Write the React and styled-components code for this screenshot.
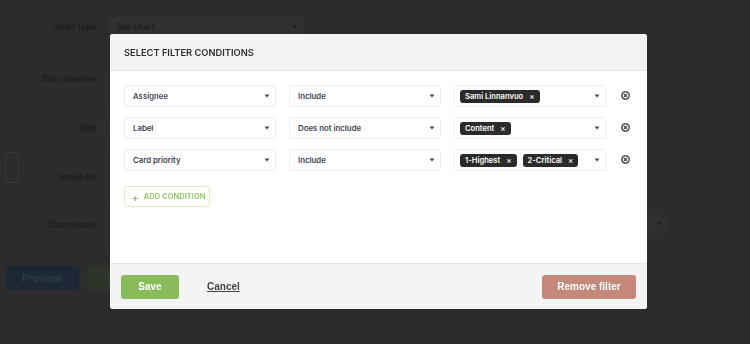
import React from "react";
import styled, { createGlobalStyle } from "styled-components";

const GlobalStyle = createGlobalStyle`
  html, body {
    margin: 0;
    padding: 0;
    background: #2c2c2c;
    overflow: hidden;
  }
  * {
    box-sizing: border-box;
  }
`;

const conditions = [
  { field: "Assignee", op: "Include", values: ["Sami Linnanvuo"] },
  { field: "Label", op: "Does not include", values: ["Content"] },
  { field: "Card priority", op: "Include", values: ["1-Highest", "2-Critical"] },
];

const formRows = [
  { label: "Chart type", height: 54, field: "select", value: "Bar chart" },
  { label: "Data sources", height: 51 },
  { label: "Unit", height: 47 },
  { label: "Group by", height: 50, check: true },
  { label: "Chart name", height: 47, rightSelect: true },
];

function Caret({ dim }) {
  return (
    <CaretSvg width="6" height="4" viewBox="0 0 6 4" $dim={dim}>
      <path d="M0.5 0.5 L5.5 0.5 L3 3.5 Z" fill="currentColor" />
    </CaretSvg>
  );
}

function RemoveIcon() {
  return (
    <svg width="9" height="9" viewBox="0 0 10 10">
      <circle cx="5" cy="5" r="4.1" fill="none" stroke="#505050" strokeWidth="1.7" />
      <path d="M3.4 3.4 L6.6 6.6 M6.6 3.4 L3.4 6.6" stroke="#505050" strokeWidth="1.6" />
    </svg>
  );
}

function App() {
  return (
    <>
      <GlobalStyle />
      <Page>
        <Form>
          {formRows.map((row) => (
            <FormRow key={row.label} $h={row.height}>
              {row.check && <CheckBox />}
              <FormLabel>{row.label}</FormLabel>
              {row.field === "select" && (
                <PageSelect>
                  {row.value}
                  <Caret dim />
                </PageSelect>
              )}
              {row.label === "Unit" && <UnitBox />}
              {row.rightSelect && (
                <RightSelect>
                  <Caret dim />
                </RightSelect>
              )}
            </FormRow>
          ))}
        </Form>
        <PageActions>
          <PreviewButton>Preview</PreviewButton>
          <CreateButton>Create</CreateButton>
        </PageActions>
      </Page>

      <Overlay>
        <Modal>
          <Header>Select filter conditions</Header>
          <Body>
            {conditions.map((c) => (
              <ConditionRow key={c.field}>
                <Select>
                  <span>{c.field}</span>
                  <Caret />
                </Select>
                <Select>
                  <span>{c.op}</span>
                  <Caret />
                </Select>
                <Select $multi>
                  <Tags>
                    {c.values.map((v) => (
                      <Tag key={v}>
                        {v}
                        <TagX>×</TagX>
                      </Tag>
                    ))}
                  </Tags>
                  <Caret />
                </Select>
                <RemoveButton>
                  <RemoveIcon />
                </RemoveButton>
              </ConditionRow>
            ))}
            <AddButton>
              <Plus>+</Plus>
              Add condition
            </AddButton>
          </Body>
          <Footer>
            <SaveButton>Save</SaveButton>
            <CancelLink>Cancel</CancelLink>
            <Spacer />
            <RemoveFilterButton>Remove filter</RemoveFilterButton>
          </Footer>
        </Modal>
      </Overlay>
    </>
  );
}

export default App;

const Page = styled.div`
  width: 750px;
  height: 344px;
  font-family: "Inter", "Liberation Sans", sans-serif;
`;

const Form = styled.div`
  display: flex;
  flex-direction: column;
`;

const FormRow = styled.div`
  position: relative;
  height: ${(p) => p.$h}px;
  display: flex;
  align-items: center;
  border-bottom: 1px solid #303030;
  padding-left: 4px;
`;

const FormLabel = styled.div`
  width: 92px;
  text-align: right;
  font-size: 8.5px;
  font-weight: 600;
  color: #1c1c1c;
`;

const PageSelect = styled.div`
  margin-left: 13px;
  width: 196px;
  height: 19px;
  background: #303030;
  border-radius: 2px;
  display: flex;
  align-items: center;
  justify-content: space-between;
  padding: 0 7px 0 8px;
  font-size: 8.5px;
  font-weight: 600;
  color: #1c1c1c;
`;

const UnitBox = styled.div`
  margin-left: 6px;
  width: 20px;
  height: 20px;
  background: #2f2f2f;
`;

const CheckBox = styled.div`
  position: absolute;
  left: 5px;
  top: 0;
  width: 14px;
  height: 31px;
  border: 1px solid #353535;
  border-bottom-color: #3a3a3a;
`;

const RightSelect = styled.div`
  position: absolute;
  left: 590px;
  top: 12px;
  width: 77px;
  height: 20px;
  background: #2f2f2f;
  display: flex;
  align-items: center;
  justify-content: flex-end;
  padding-right: 5px;
`;

const PageActions = styled.div`
  display: flex;
  gap: 8px;
  padding: 17px 0 0 5px;
`;

const BasePageButton = styled.div`
  width: 74px;
  height: 24px;
  border-radius: 3px;
  display: flex;
  align-items: center;
  justify-content: center;
  font-size: 10.5px;
  font-weight: 600;
`;

const PreviewButton = styled(BasePageButton)`
  background: #1d2735;
  color: #2d3a4b;
`;

const CreateButton = styled(BasePageButton)`
  background: #2e3429;
  color: #3c4436;
`;

const CaretSvg = styled.svg`
  flex: none;
  color: ${(p) => (p.$dim ? "#1a1a1a" : "#3a4656")};
`;

const Overlay = styled.div`
  position: fixed;
  inset: 0;
  padding: 34px 0 0 110px;
  font-family: "Inter", "Liberation Sans", sans-serif;
`;

const Modal = styled.div`
  width: 537px;
  height: 275px;
  background: #fff;
  border-radius: 3px;
  overflow: hidden;
  display: flex;
  flex-direction: column;
`;

const Header = styled.div`
  height: 37px;
  flex: none;
  background: #f4f4f4;
  border-bottom: 1px solid #e8e8e8;
  display: flex;
  align-items: center;
  padding-left: 14px;
  text-transform: uppercase;
  font-size: 9.3px;
  font-weight: 600;
  color: #2e2e2e;
`;

const Body = styled.div`
  flex: 1;
  padding: 14px 14px 0 14px;
  display: flex;
  flex-direction: column;
  gap: 10px;
`;

const ConditionRow = styled.div`
  display: flex;
  align-items: center;
  gap: 13px;
`;

const Select = styled.div`
  flex: none;
  width: 152px;
  height: 22px;
  border: 1px solid #eeeeee;
  border-radius: 3px;
  background: #fff;
  display: flex;
  align-items: center;
  justify-content: space-between;
  padding: 0 5px 0 ${(p) => (p.$multi ? 5 : 8)}px;
  font-size: 7.8px;
  font-weight: 600;
  color: #3b4452;
`;

const Tags = styled.div`
  display: flex;
  gap: 6px;
`;

const Tag = styled.div`
  height: 13px;
  background: #2b2b2b;
  border-radius: 3px;
  color: #fff;
  display: flex;
  align-items: center;
  gap: 6px;
  padding: 0 5px;
  font-size: 7.6px;
  font-weight: 600;
`;

const TagX = styled.span`
  font-size: 8px;
  line-height: 1;
  color: #ddd;
`;

const RemoveButton = styled.div`
  flex: none;
  width: 12px;
  display: flex;
  align-items: center;
  justify-content: center;
  margin-top: -2px;
`;

const AddButton = styled.div`
  margin-top: 5px;
  width: 86px;
  height: 21px;
  border: 1px solid #d9ecc6;
  border-radius: 3px;
  display: flex;
  align-items: center;
  padding-left: 7px;
  gap: 5px;
  color: #8cc65a;
  font-size: 7.4px;
  font-weight: 600;
  letter-spacing: 0.1px;
  text-transform: uppercase;
`;

const Plus = styled.span`
  font-size: 10px;
  line-height: 1;
`;

const Footer = styled.div`
  height: 46px;
  flex: none;
  background: #f4f4f4;
  border-top: 1px solid #e8e8e8;
  display: flex;
  align-items: center;
  padding: 0 11px;
  font-family: "Liberation Sans", Arial, sans-serif;
`;

const FooterButton = styled.div`
  height: 24px;
  border-radius: 3px;
  display: flex;
  align-items: center;
  justify-content: center;
  color: #fff;
  font-size: 10px;
  font-weight: 700;
`;

const SaveButton = styled(FooterButton)`
  width: 58px;
  background: #89bb5b;
`;

const CancelLink = styled.div`
  margin-left: 28px;
  font-size: 10px;
  font-weight: 700;
  color: #444;
  text-decoration: underline;
`;

const Spacer = styled.div`
  flex: 1;
`;

const RemoveFilterButton = styled(FooterButton)`
  width: 94px;
  background: #c5897c;
`;
